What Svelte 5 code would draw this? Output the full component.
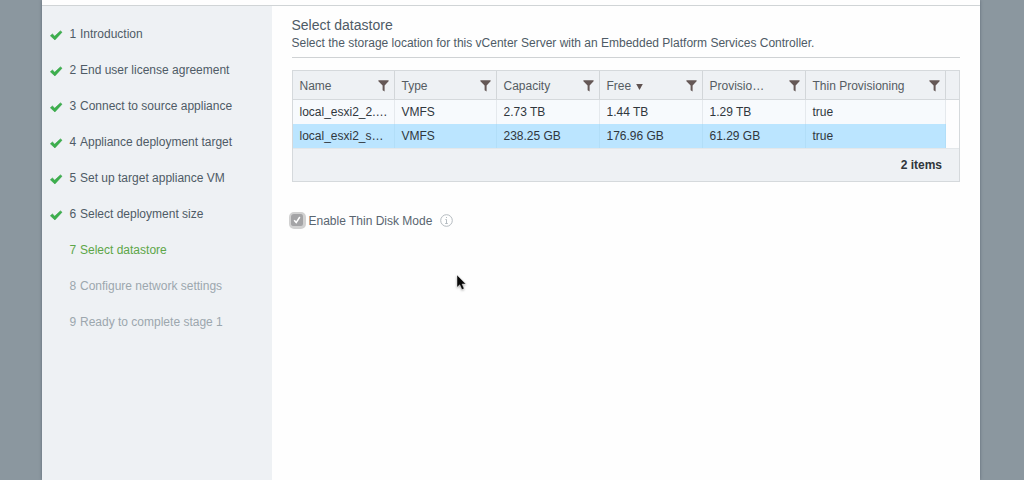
<script>
  const steps = [
    'Introduction',
    'End user license agreement',
    'Connect to source appliance',
    'Appliance deployment target',
    'Set up target appliance VM',
    'Select deployment size',
    'Select datastore',
    'Configure network settings',
    'Ready to complete stage 1'
  ];
  const current = 6;
  const columns = ['Name', 'Type', 'Capacity', 'Free', 'Provisio…', 'Thin Provisioning'];
  const rows = [
    ['local_esxi2_2.…', 'VMFS', '2.73 TB', '1.44 TB', '1.29 TB', 'true'],
    ['local_esxi2_s…', 'VMFS', '238.25 GB', '176.96 GB', '61.29 GB', 'true']
  ];
</script>

<div class="backdrop">
  <div class="dialog">
    <div class="top"></div>
    <div class="body">
      <nav>
        {#each steps as step, i}
          <div class="step" class:current={i === current} class:pending={i > current}>
            <span class="mark">
              {#if i < current}
                <svg width="14" height="12" viewBox="0 0 14 12">
                  <path d="M0.4 5.8L2.4 4L4.7 6.2L10.4 0.9L12 2.2L4.9 9.9Z" fill="#3cb04c" stroke="#309d43" stroke-width=".6" />
                </svg>
              {/if}
            </span>
            <span class="num">{i + 1}</span><span>{step}</span>
          </div>
        {/each}
      </nav>
      <main>
        <h1>Select datastore</h1>
        <p>Select the storage location for this vCenter Server with an Embedded Platform Services Controller.</p>
        <div class="grid">
          <div class="row head">
            {#each columns as col}
              <div class="cell">
                <span>{col}</span>
                {#if col === 'Free'}
                  <svg class="sort" width="7" height="6" viewBox="0 0 7 6"><path d="M0.2 0H6.8L3.5 6Z" fill="#5f5250" /></svg>
                {/if}
                <svg class="filter" width="11" height="12" viewBox="0 0 11 12"><path d="M0.4 0.2H10.6V1.2L6.6 5.4V11.5L4.6 10.2V5.4L0.4 1.2Z" fill="#655856" /></svg>
              </div>
            {/each}
            <div></div>
          </div>
          {#each rows as row, r}
            <div class="row data" class:selected={r === 1}>
              {#each row as value}<div class="cell"><span>{value}</span></div>{/each}
              <div class="spare"></div>
            </div>
          {/each}
          <div class="foot">2 items</div>
        </div>
        <div class="option">
          <span class="check">
            <svg width="12" height="12" viewBox="0 0 12 12"><path d="M3.2 6.3L5.2 8.6L8.8 3" fill="none" stroke="#fff" stroke-width="1.5" /></svg>
          </span>
          <span class="label">Enable Thin Disk Mode</span>
          <svg class="info" width="13" height="13" viewBox="0 0 13 13">
            <circle cx="6.5" cy="6.5" r="5.8" fill="#fff" stroke="#b4babf" />
            <path d="M5.4 5.5H6.5V9.4M5.2 9.5H7.8M6 3.5H7" fill="none" stroke="#aeb5bb" stroke-width=".9" />
          </svg>
        </div>
      </main>
    </div>
  </div>
  <svg class="pointer" width="12" height="18" viewBox="0 0 12 18">
    <path d="M1 1V13.3L3.8 10.8L5.9 15.6L8.1 14.6L6.1 10H9.8Z" fill="#080808" stroke="#fff" stroke-width=".4" />
  </svg>
</div>

<style>
  :global(body) { margin: 0; }
  .backdrop {
    position: relative;
    box-sizing: border-box;
    height: 480px;
    padding: 0 44px 0 42px;
    overflow: hidden;
    background: #8b979f;
    font: 12px/16px "Liberation Sans", Arial, sans-serif;
    color: #4e5b66;
  }
  .dialog {
    display: flex;
    flex-direction: column;
    height: 480px;
    background: #fefefe;
    box-shadow: 0 0 3px #5e6a76;
  }
  .top { height: 5px; border-bottom: 1px solid #d0d4d6; }
  .body { display: flex; flex: 1; }
  nav { width: 230px; padding-top: 10px; background: #eef1f4; }
  .step { display: flex; align-items: center; height: 36px; }
  .mark { width: 19.5px; height: 12px; padding-left: 8px; margin-top: 3px; }
  .mark svg { display: block; }
  .num { width: 10.5px; }
  .current { color: #5da648; }
  .pending { color: #9ca7ae; }
  main { flex: 1; padding: 10px 20px 0; }
  h1 { margin: 0 0 0 -0.5px; font-size: 14px; line-height: 18px; font-weight: 400; }
  p { margin: 1px 0 12px; height: 22px; border-bottom: 1px solid #cfd2d4; white-space: nowrap; text-indent: -0.5px; }
  .grid { box-sizing: border-box; height: 112px; border: 1px solid #d5d9dc; background: #eef1f4; }
  .row { display: grid; grid-template-columns: 102px 102px 103px 103px 103px 140px 1fr; }
  .head { height: 28px; border-bottom: 1px solid #d5d9dc; color: #555c62; }
  .cell {
    display: flex;
    align-items: center;
    box-sizing: border-box;
    padding-left: 6.5px;
    border-right: 1px solid #d2d6d9;
    white-space: nowrap;
  }
  .head .cell { padding-top: 2px; }
  .sort { margin: 2px 0 0 4.5px; }
  .filter { margin: -1px 5.5px 0 auto; }
  .data { height: 24px; background: #f7fafd; color: #30373d; }
  .data .cell { border-color: #e5e9ed; }
  .data.selected { height: 25px; background: #bbe5ff; border-bottom: 1px solid #e3e7ea; box-sizing: border-box; }
  .selected .cell { border-color: #b2def8; }
  .spare { background: #fdfdfe; }
  .foot { padding: 8px 17px 0 0; text-align: right; font-weight: 700; color: #30363b; }
  .option { display: flex; align-items: center; margin: 29px 0 0 -3px; height: 18px; }
  .check { width: 12px; height: 12px; border: 2.5px solid #d1d1d1; border-width: 2px 3px 3px 2px; border-radius: 5px; background: #a4a4a6; }
  .check svg { display: block; }
  .label { margin: 1px 8px 0 2.5px; color: #596570; }
  .pointer { position: absolute; left: 456px; top: 274px; filter: drop-shadow(0 1px 1px #aaa); }
</style>
